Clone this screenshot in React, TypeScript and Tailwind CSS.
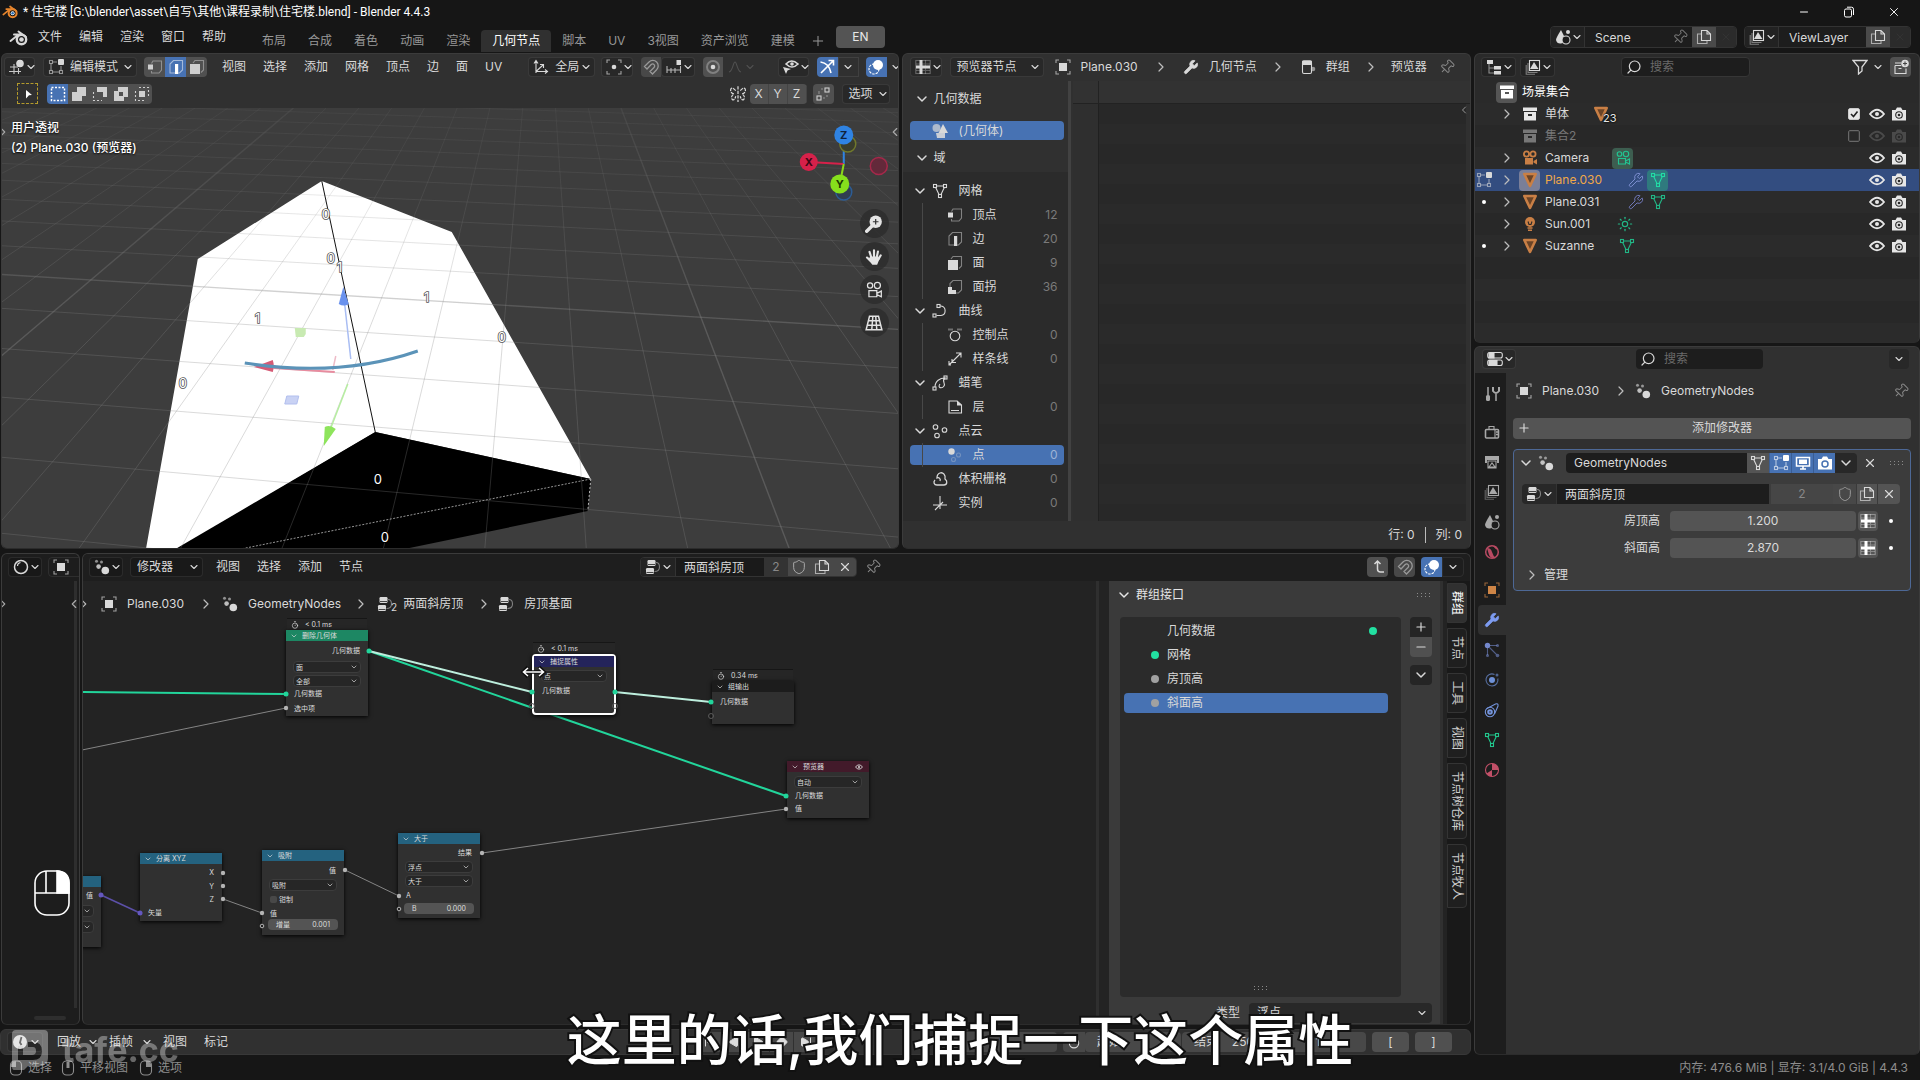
import React from "react";
import { ChevronDown, ChevronRight, ChevronLeft, Pin, Search, Shield, X, Wrench, Plus, Minus, Timer, Sun, SkipBack, SkipForward, Play, Diamond } from "lucide-react";

const F = "font-[Inter,'Noto_Sans_CJK_SC',sans-serif]";

/* ---------- icons ---------- */
const icons: Record<string, React.ReactNode> = {
  object: (
    <>
      <path d="M1 4V1h3M12 1h3v3M15 12v3h-3M4 15H1v-3" opacity=".7" />
      <rect x="4" y="4" width="8" height="8" fill="currentColor" stroke="none" />
    </>
  ),
  magnet: <path d="M1.5 7.5 6 3a5.4 5.4 0 0 1 7.600 7.700L9.500 15 7 12.500 11 8.500a2 2 0 0 0-2.800-3L4 10Z" strokeWidth="1.3" />,
  zoom: (
    <>
      <path d="M1.500 14.500 6 10" strokeWidth="3" strokeLinecap="round" />
      <circle cx="9.500" cy="6" r="5.500" fill="currentColor" stroke="none" />
      <path d="M9.500 3.500v5M7 6h5" stroke="#333" />
    </>
  ),
  hand: (
    <>
      <path d="M5.500 8 4 3.500M8 7.500V2M10.500 8l1-4.800M12 10l2-3.500M4.500 11 1.800 8.500" strokeWidth="1.900" strokeLinecap="round" />
      <path d="M4.500 7.500h7.500l.8 2.500-2 4.800H6.500L3 10.500z" fill="currentColor" stroke="none" />
    </>
  ),
  mesh: (
    <>
      <path d="M4.500 3h7M3.700 4.500 7 11.500M12.300 4.500 9 11.500" />
      <rect x="1.500" y="1.500" width="3" height="3" />
      <rect x="11.500" y="1.500" width="3" height="3" />
      <rect x="6.500" y="11.500" width="3" height="3" />
    </>
  ),
  tri: <path d="M2.300 2h11.400L8 14Z" fill="#6b4427" strokeWidth="2.600" strokeLinejoin="round" />,
  geonodes: (
    <g fill="currentColor" stroke="none">
      <circle cx="2.500" cy="2.200" r="1.500" opacity=".6" />
      <circle cx="7.500" cy="3" r="1.500" opacity=".6" />
      <circle cx="4.600" cy="7.600" r="2.300" opacity=".85" />
      <circle cx="11.300" cy="11.500" r="3.800" />
    </g>
  ),
  nodetree: (
    <>
      <rect x="2.500" y="1" width="8" height="6" rx="1.200" fill="currentColor" stroke="none" />
      <rect x="1" y="9" width="8" height="6" rx="1.200" fill="currentColor" stroke="none" />
      <path d="M3 5.500h7M1.500 13.500h7" stroke="#222" strokeWidth=".8" />
      <path d="M11 3.500q3.500 0 3.500 4.500T9.500 12.500" opacity=".5" />
    </>
  ),
  dup: (
    <>
      <path d="M5.500 1.500h5.500l3.500 3.500v6.500h-9zM11 1.500v3.500h3.500" />
      <path d="M5 5H1.500v9.500H11V12" opacity=".7" />
    </>
  ),
  vmode: (
    <>
      <path d="M4.500 4.500 6 2h8.500v9L12 14H4.500v-2" opacity=".5" />
      <rect x="1" y="5.500" width="5" height="5" fill="currentColor" stroke="none" />
    </>
  ),
  emode: (
    <>
      <path d="M2 14V5l3.500-3.500h9V11L11.500 14Z" opacity=".5" />
      <rect x="7" y="5" width="3.200" height="10" fill="currentColor" stroke="none" />
    </>
  ),
  fmode: (
    <>
      <path d="M4 4l2-2.500h8.500V11l-2.500 2.500" opacity=".5" />
      <rect x="1" y="5" width="10" height="10" fill="currentColor" stroke="none" />
    </>
  ),
  corner: (
    <>
      <path d="M3 8V4.500L6 1.500h8.500V11L11.500 14H9" opacity=".5" />
      <path d="M1 8h4v3h4v4H1z" fill="currentColor" stroke="none" />
    </>
  ),
  view3d: (
    <>
      <path d="M5 5v10M9.500 9v6M1 8h8M0 12.500h12" opacity=".9" />
      <circle cx="11" cy="4.500" r="3.800" fill="currentColor" stroke="none" />
    </>
  ),
  editmode: (
    <>
      <path d="M4.500 3H9M3 4.500v7M4.500 13h7M13 7v4.500" opacity=".6" />
      <rect x="1.500" y="1.500" width="3" height="3" opacity=".6" />
      <rect x="1.500" y="11.500" width="3" height="3" opacity=".6" />
      <rect x="11.500" y="11.500" width="3" height="3" opacity=".6" />
      <rect x="10" y="0" width="6" height="6" rx="1" fill="currentColor" stroke="none" />
    </>
  ),
  orient: <path d="M3 14V2M1 4.500 3 1.500l2 3M3 12.500h11M12 10.500l2.500 2L12 14.500M3 12.500 10 6M7 5.500h3.500V9" />,
  pivot: (
    <>
      <path d="M1 4V1h3M12 1h3v3M15 12v3h-3M4 15H1v-3" opacity=".7" />
      <circle cx="8" cy="8" r="2.300" fill="currentColor" stroke="none" />
    </>
  ),
  snap: (
    <>
      <path d="M1 7v7M5 9v5M9 9v5M14.500 7v7M1 11h14" opacity=".8" />
      <rect x="10.500" y="1" width="4.500" height="5" fill="currentColor" stroke="none" />
    </>
  ),
  prop: (
    <>
      <circle cx="8" cy="8" r="6" opacity=".35" strokeWidth="2" />
      <circle cx="8" cy="8" r="2.300" fill="currentColor" stroke="none" />
    </>
  ),
  falloff: <path d="M2 13C6 12 6 3 8 3s2 9 6 10" />,
  vis: (
    <>
      <path d="M3 5q5.500-6 12 0-6 6-12 0z" strokeWidth="1.600" />
      <circle cx="9" cy="5" r="1.800" fill="currentColor" stroke="none" />
      <path d="M0 8l8 2-3.500 1.500L3 15z" fill="currentColor" stroke="none" />
    </>
  ),
  gizmo: <path d="M1.500 3Q10 4 12 14M2 14 14 2M9.500 1.500H14.500V6.500" strokeWidth="1.600" />,
  overlay: (
    <>
      <circle cx="10" cy="6" r="5" fill="currentColor" stroke="none" />
      <circle cx="6" cy="10" r="5" strokeDasharray="2.500 1" />
    </>
  ),
  sheet: (
    <>
      <rect x=".8" y="1.500" width="14.400" height="13" opacity=".35" />
      <path d="M1 8h14M6 1v14" strokeWidth="3" />
      <path d="M10.500 1v14M1 5h14M1 11.500h14" opacity=".3" />
    </>
  ),
  group: (
    <>
      <rect x="2.500" y="2" width="9" height="12.500" rx="1.500" />
      <rect x="2" y="1.500" width="10" height="4.500" rx="1.200" fill="currentColor" stroke="none" />
      <circle cx="13" cy="10" r="2.300" fill="currentColor" stroke="none" opacity=".6" />
    </>
  ),
  geometry: (
    <g fill="currentColor" stroke="none">
      <circle cx="4.500" cy="5" r="4" opacity=".7" />
      <path d="M11 1l5 9H6.500z" />
      <path d="M4 10h9v5H5z" opacity=".9" />
    </g>
  ),
  curve: (
    <>
      <path d="M4.500 12.500H9a4.800 4.800 0 0 0 0-9.500H8" />
      <rect x="1" y="11" width="3" height="3" />
      <rect x="5" y="1.500" width="3" height="3" />
    </>
  ),
  cpoint: (
    <>
      <circle cx="8" cy="9" r="4.800" />
      <path d="M1 2.500h5M10 2.500h5" opacity=".4" strokeWidth="2" />
    </>
  ),
  spline: <path d="M2 14 14 2M2 10v4h2M9 2h5v4.500M5 8v3.500h4" />,
  gp: (
    <>
      <path d="M3 12C3 6 8 3 13 3 9 6 14 8 12 11s-7 2-4-2" />
      <rect x="1" y="12" width="3" height="3" />
      <rect x="12" y="1" width="3" height="3" />
    </>
  ),
  layer: (
    <>
      <path d="M2 2h8l4.500 4v8H2zM4 11.500h8" />
      <path d="M10 1.500v5h5z" fill="currentColor" stroke="none" />
    </>
  ),
  cloud3: (
    <>
      <circle cx="3.500" cy="4" r="2.300" />
      <circle cx="12.500" cy="7" r="2.300" />
      <circle cx="5" cy="12.500" r="2.300" />
    </>
  ),
  pt: (
    <>
      <circle cx="4.500" cy="4.500" r="3.200" fill="currentColor" stroke="none" />
      <circle cx="11.500" cy="8" r="2" opacity=".3" />
      <circle cx="6.500" cy="12.500" r="2" opacity=".3" />
    </>
  ),
  volume: <path d="M3 9C1 11 2 14 5 14h7c3 0 4-4 1-6C14 4 11 1 8 2 5 3 5 6 5 7c2-1 4 1 3 3" strokeWidth="1.300" />,
  instance: <path d="M8 1v13M1 10h14M3 15l8-8" />,
  scene: (
    <>
      <path d="M6 1l4 8q0 5-4 5.500T1 11q0-2 5-10z" fill="currentColor" stroke="none" />
      <circle cx="13" cy="3" r="2" fill="currentColor" stroke="none" />
      <circle cx="11" cy="11" r="4" fill="#1d1d1d" />
    </>
  ),
  layers: (
    <>
      <rect x="4.500" y="1.500" width="10" height="10" />
      <path d="M5 10l4-7 4.500 7z" fill="currentColor" stroke="none" />
      <path d="M3 4v9.500h9.500M1.200 6v9.300H10" opacity=".5" />
    </>
  ),
  outliner: (
    <>
      <rect x="1" y="1" width="6" height="4" fill="currentColor" stroke="none" />
      <path d="M3 5v9h5M3 9h5" opacity=".6" />
      <rect x="8" y="7" width="7" height="3.500" fill="currentColor" stroke="none" />
      <rect x="8" y="12" width="7" height="3.500" fill="currentColor" stroke="none" />
    </>
  ),
  coll: (
    <>
      <rect x="1" y="1.500" width="14" height="3.500" fill="currentColor" stroke="none" />
      <path d="M2 6h12v8.500H2zM6 8v2h4V8z" fill="currentColor" fillRule="evenodd" stroke="none" />
    </>
  ),
  newcoll: (
    <>
      <path d="M2 4h6M2 6.500v8h11v-5M2 6.500h6M5.500 9.500h3" />
      <circle cx="12" cy="4.500" r="3.800" fill="currentColor" stroke="none" />
      <path d="M12 2.500v4M10 4.500h4" stroke="#444" />
    </>
  ),
  eye: (
    <>
      <path d="M1 8q7-8.500 14 0-7 8.500-14 0z" strokeWidth="1.800" />
      <circle cx="8" cy="8" r="2" fill="currentColor" stroke="none" />
    </>
  ),
  render: (
    <>
      <path d="M1 4h3.500l1.500-2.500h4L11.500 4H15v10.500H1z" fill="currentColor" stroke="none" />
      <circle cx="8" cy="9" r="3.300" stroke="#282828" />
      <circle cx="8" cy="9" r="1.300" fill="#282828" stroke="none" />
    </>
  ),
  renderblue: (
    <>
      <path d="M1 4h3.500l1.500-2.500h4L11.500 4H15v10.500H1z" fill="currentColor" stroke="none" />
      <circle cx="8" cy="9" r="3" stroke="#4772b3" strokeWidth="1.500" />
    </>
  ),
  camobj: (
    <>
      <circle cx="4.500" cy="4" r="2.600" strokeWidth="1.800" />
      <circle cx="11" cy="4" r="2.600" strokeWidth="1.800" />
      <path d="M3 8h8v6.500H3z" fill="currentColor" stroke="none" />
      <path d="M11.500 11l3.500-2v5.500l-3.500-2z" fill="currentColor" stroke="none" />
    </>
  ),
  camdata: (
    <>
      <circle cx="4.500" cy="4" r="2.300" />
      <circle cx="11" cy="4" r="2.700" />
      <path d="M3.500 8.500h7v5.500h-7zM10.500 11l4-2v5l-4-2z" />
    </>
  ),
  bulb: (
    <>
      <circle cx="8" cy="6" r="5" fill="currentColor" stroke="none" />
      <path d="M5.500 12h5M6 14.300h4" strokeWidth="1.600" />
      <path d="M6 5.500l1 3h2l1-3" stroke="#282828" />
    </>
  ),
  props: (
    <>
      <rect x=".7" y="1.500" width="14.600" height="5.500" rx="2" />
      <rect x=".7" y="9" width="14.600" height="5.500" rx="2" />
      <path d="M2 2h5v5H2zM2 9.500h8v5H2z" fill="currentColor" />
    </>
  ),
  tool: (
    <>
      <path d="M4 1v8M12 8v7" strokeWidth="1.500" />
      <rect x="2" y="9" width="4" height="6" rx="1.500" fill="currentColor" stroke="none" />
      <path d="M9 1v4q3 4 6 0V1" strokeWidth="2" />
    </>
  ),
  output2: (
    <>
      <rect x="1.500" y="5.500" width="13" height="8.500" rx="1" strokeWidth="1.600" />
      <path d="M5 5V2.500h5V5M11 5.500v8.500" />
      <path d="M12 8h2M12 10.500h2" strokeWidth="1.500" />
    </>
  ),
  printer: (
    <>
      <path d="M1 2h14v7h-2V6H3v3H1z" fill="currentColor" stroke="none" />
      <path d="M4 7h8v7H4zM5 13l3-4 3 4z" />
    </>
  ),
  world: (
    <>
      <circle cx="8" cy="8" r="6.300" strokeWidth="1.500" />
      <path d="M3 4q4 0 5 4t4 6q-5 1-7-3zM9 2q2 3 5 4l-2-4z" fill="currentColor" stroke="none" />
    </>
  ),
  particles: (
    <>
      <path d="M3.500 6v7M6 3.500h7M5.500 5.500l7 7" opacity=".6" />
      <circle cx="3.500" cy="3.500" r="2.700" fill="currentColor" stroke="none" />
      <circle cx="13.500" cy="3.500" r="1.500" fill="currentColor" stroke="none" opacity=".6" />
      <circle cx="3.500" cy="13.500" r="1.500" fill="currentColor" stroke="none" opacity=".6" />
      <circle cx="13.500" cy="13.500" r="1.800" fill="currentColor" stroke="none" opacity=".6" />
    </>
  ),
  physics: (
    <>
      <path d="M10.500 2.500a6 6 0 1 0 3.300 4" opacity=".7" />
      <circle cx="8" cy="8" r="3" fill="currentColor" stroke="none" />
      <circle cx="13" cy="3" r="1.500" fill="currentColor" stroke="none" opacity=".6" />
    </>
  ),
  constraint: (
    <>
      <circle cx="6" cy="10" r="4.700" />
      <circle cx="6" cy="10" r="1.800" strokeWidth="2" />
      <path d="M3 6.500 11.500 2q3-1 2.500 2l-3.500 8" />
    </>
  ),
  material: (
    <>
      <circle cx="8" cy="8" r="6.500" />
      <path d="M8 8V1.500A6.500 6.500 0 0 1 14.500 8zM8 8v6.500A6.500 6.500 0 0 1 2.500 11.500L8 8z" fill="currentColor" stroke="none" />
    </>
  ),
  monitor: (
    <>
      <rect x="1.500" y="2.500" width="13" height="8.500" strokeWidth="1.500" />
      <rect x="4" y="4.500" width="8" height="4.500" fill="currentColor" stroke="none" />
      <path d="M5 14h6M8 11v3" strokeWidth="1.600" />
    </>
  ),
  sphere: (
    <>
      <circle cx="8" cy="8" r="6.500" strokeWidth="1.500" />
      <path d="M4.500 7q0-3 3-3.500" />
    </>
  ),
  up: <path d="M4.500 5 7.500 2l3 3M7.500 2v8q0 3 3 3H14" strokeWidth="1.500" />,
  clock: (
    <>
      <circle cx="8" cy="8" r="7" fill="currentColor" stroke="none" />
      <path d="M9.500 3 8 8.500 9.500 11" stroke="#1d1d1d" strokeWidth="1.800" />
    </>
  ),
  mirror: <path d="M8 1v14M6 5Q2 1 1.500 4t3 4Q1 10 3 13q2 1 3-3M10 5q4-4 4.500-1t-3 4q3.500 2 1.500 5-2 1-3-3" strokeDasharray="3 1" />,
  auto: (
    <>
      <rect x="10" y="2" width="4" height="4" />
      <rect x="2" y="10" width="4" height="4" />
      <path d="M4 8V5M6 3h2M8 12h2M12 9v2" opacity=".5" />
    </>
  ),
  cursor: <path d="M6 4l6 5-3 .3L6 12.500z" fill="currentColor" stroke="none" />,
  s1: <rect x="1.500" y="1.500" width="13" height="13" strokeDasharray="2 1.500" strokeWidth="1.500" />,
  s2: <path d="M6 1h9v9h-4v5H1V6h5z" fill="currentColor" stroke="none" />,
  s3: (
    <>
      <path d="M5 1h10v10h-4V6H5z" fill="currentColor" stroke="none" />
      <path d="M1.500 6v8.500H10" strokeDasharray="2 2" />
    </>
  ),
  s4: <path d="M5 1h10v10h-4v4H1V5h4zM6 6v4h4V6z" fill="currentColor" fillRule="evenodd" stroke="none" />,
  s5: (
    <>
      <path d="M5 1.500h9.500V10M1.500 5v9.500H11" strokeDasharray="2 2" />
      <rect x="5" y="5" width="6" height="6" fill="currentColor" stroke="none" />
    </>
  ),
  persp: <path d="M4 2h8l3 12H1zM3.500 6h9.500M2.300 10h11.500M7 2 6 14M9.500 2l1 12" strokeWidth="1.300" />,
  mouseL: (
    <>
      <rect x="2.500" y="1" width="11" height="14" rx="4" />
      <path d="M3 7V4q1-3 5-3v6z" fill="currentColor" stroke="none" />
    </>
  ),
  mouseM: (
    <>
      <rect x="2.500" y="1" width="11" height="14" rx="4" />
      <rect x="6.500" y="2" width="3" height="6" fill="currentColor" stroke="none" />
    </>
  ),
  mouseR: (
    <>
      <rect x="2.500" y="1" width="11" height="14" rx="4" />
      <path d="M13 7V4q-1-3-5-3v6z" fill="currentColor" stroke="none" />
    </>
  ),
};

function Ico({ n, c = "size-4" }: { n: string; c?: string }) {
  return (
    <svg viewBox="0 0 16 16" className={"shrink-0 " + c} fill="none" stroke="currentColor" strokeWidth="1.100" aria-hidden="true">
      {icons[n]}
    </svg>
  );
}

const Down = ({ c = "size-3" }: { c?: string }) => <ChevronDown className={"shrink-0 " + c} strokeWidth={2.2} />;
const Right = ({ c = "" }: { c?: string }) => <ChevronRight className={"size-4 shrink-0 text-[#bdbdbd] " + c} strokeWidth={1.8} />;

function IconDrop({ n, label, c = "w-8" }: { n: string; label: string; c?: string }) {
  return (
    <button aria-label={label} className={"flex h-5 shrink-0 items-center justify-between rounded-sm border border-white/8 bg-black/15 pl-1 pr-px " + c}>
      <Ico n={n} />
      <Down />
    </button>
  );
}

function Drop({ label, value, icon, c }: { label: string; value: string; icon?: string; c: string }) {
  return (
    <label className={"relative flex h-5 shrink-0 items-center rounded-sm border border-white/8 bg-black/15 " + c}>
      {icon && <Ico n={icon} c="size-4 ml-1" />}
      <select aria-label={label} className="h-full min-w-0 flex-1 appearance-none bg-transparent pl-1.5 outline-none">
        <option>{value}</option>
      </select>
      <Down c="size-3 pointer-events-none absolute right-0.5" />
    </label>
  );
}

function Menu({ items, c = "" }: { items: string[]; c?: string }) {
  return (
    <nav className={"flex shrink-0 gap-px " + c}>
      {items.map((m) => (
        <button key={m} className="px-2">
          {m}
        </button>
      ))}
    </nav>
  );
}

const area = "overflow-hidden rounded-md border border-[#3b3b3b] border-b-[#2c2c2c] min-h-0 min-w-0";

/* ---------- title + top bar ---------- */
function Logo({ c, color }: { c: string; color: boolean }) {
  return (
    <svg viewBox="0 0 20 16" className={c} aria-hidden="true">
      <g stroke={color ? "#e8862d" : "#d8d8d8"} strokeWidth="2" fill="none" strokeLinecap="round">
        <path d="M9.500 1.500 17 7M5 4.500h7M1.500 11 9 5" />
        <circle cx="12.500" cy="9.500" r="4.700" strokeWidth="2.400" />
      </g>
      <circle cx="12.500" cy="9.500" r="2.300" fill={color ? "#fff" : "#d8d8d8"} />
      {color && <circle cx="12.500" cy="9.500" r="1.500" fill="#2a6fb5" />}
    </svg>
  );
}

function TitleBar() {
  return (
    <header className="flex h-6 shrink-0 items-center pl-0.5 text-white">
      <Logo c="h-3.5 w-[17px]" color />
      <h1 className="ml-1 font-[Roboto,'Noto_Sans_CJK_SC',sans-serif] text-xs">* 住宅楼 [G:\blender\asset\自写\其他\课程录制\住宅楼.blend] - Blender 4.4.3</h1>
      <div className="ml-auto flex items-center">
        <button aria-label="最小化" className="flex w-11 justify-center">
          <Minus className="size-3" />
        </button>
        <button aria-label="还原" className="flex w-[45px] justify-center">
          <svg viewBox="0 0 12 12" className="size-3" fill="none" stroke="currentColor">
            <rect x="1.500" y="3" width="7" height="8" rx="1.500" />
            <path d="M4 1.200h4.500q2 0 2 2V9" />
          </svg>
        </button>
        <button aria-label="关闭" className="mr-1 flex w-[45px] justify-center">
          <X className="size-3.5" strokeWidth={1.6} />
        </button>
      </div>
    </header>
  );
}

function IdBox({ icon, name, pin, c }: { icon: string; name: string; pin?: boolean; c: string }) {
  return (
    <div className={"flex h-[22px] items-center overflow-hidden rounded border border-[#333] bg-[#1d1d1d] " + c}>
      <button aria-label={"浏览 " + name} className="flex h-full w-[34px] items-center justify-between border-r border-[#333] bg-[#222] pl-1 pr-0.5">
        <Ico n={icon} />
        <Down />
      </button>
      <input aria-label={name} defaultValue={name} className="h-full min-w-0 flex-1 bg-transparent pl-2.5 outline-none" />
      {pin && <Pin className="mr-1 size-4 rotate-45 text-[#777]" strokeWidth={1.5} />}
      <button aria-label="新建" className="flex h-full w-6 items-center justify-center bg-[#4a4a4a]">
        <Ico n="dup" />
      </button>
      <button aria-label="删除" className="flex h-full w-5 items-center justify-center bg-[#2b2b2b] text-[#333]">
        <X className="size-3" />
      </button>
    </div>
  );
}

function TopBar() {
  const tabs = ["布局", "合成", "着色", "动画", "渲染", "几何节点", "脚本", "UV", "3视图", "资产浏览", "建模"];
  return (
    <div className="flex h-[29px] shrink-0 items-start pt-0.5">
      <button aria-label="Blender" className="ml-[9px] mt-1">
        <Logo c="h-4 w-5" color={false} />
      </button>
      <Menu items={["文件", "编辑", "渲染", "窗口", "帮助"]} c="ml-px h-[22px] items-center" />
      <div role="tablist" className="ml-[17px] mt-1 flex h-[22px] shrink-0">
        {tabs.map((t) => (
          <button
            key={t}
            role="tab"
            aria-selected={t === "几何节点"}
            className={t === "几何节点" ? "rounded-t bg-[#303030] px-[11px] text-white" : "px-[11px] text-[#989898]"}
          >
            {t}
          </button>
        ))}
      </div>
      <button aria-label="添加工作区" className="ml-1 mt-1 flex h-[22px] items-center text-[#989898]">
        <Plus className="size-4" strokeWidth={1.5} />
      </button>
      <button className="ml-2.5 h-[22px] w-[49px] rounded bg-[#545454] text-[#e8e8e8]">EN</button>
      <div className="ml-auto mr-[9px] flex gap-[7px]">
        <IdBox icon="scene" name="Scene" pin c="w-[187px]" />
        <IdBox icon="layers" name="ViewLayer" c="w-[167px]" />
      </div>
    </div>
  );
}

/* ---------- 3D viewport ---------- */
function Scene3D() {
  const a: number[] = [];
  for (let k = 0; k < 18; k++) a.push(1 / (0.001543 + 0.000205 * k) - 115);
  const b: number[] = [];
  for (let i = -9; i < 19; i++) b.push(i);
  const vals: [string, number, number][] = [
    ["0", 326, 219],
    ["0", 331, 263],
    ["1", 340, 272],
    ["1", 427, 302],
    ["1", 258, 323],
    ["0", 502, 342],
    ["0", 183, 388],
  ];
  return (
    <svg viewBox="2 108 896 440" preserveAspectRatio="xMidYMid slice" className="absolute inset-0 size-full" role="img" aria-label="视口">
      <defs>
        <linearGradient id="fade" x1="0" y1="108" x2="0" y2="330" gradientUnits="userSpaceOnUse">
          <stop offset="0" stopColor="#fff" stopOpacity=".35" />
          <stop offset="1" stopColor="#fff" />
        </linearGradient>
        <mask id="far" maskUnits="userSpaceOnUse" x="0" y="100" width="900" height="460">
          <rect x="0" y="100" width="900" height="460" fill="url(#fade)" />
        </mask>
      </defs>
      <rect x="0" y="100" width="900" height="460" fill="#3d3d3d" />
      <path d="M322 181 198 259 146 550H176L375.500 432 591 479 452 232Z" fill="#fff" />
      <path d="M375.500 432 591 479 588 511 400 550H174Z" fill="#000" />
      <g mask="url(#far)">
        {a.map((y, k) => (
          <path key={k} d={`M0 ${y}L900 ${y + ((y + 126) / 6547) * 900}`} stroke="#848484" strokeWidth={k === 5 ? 1.4 : 1} strokeOpacity={k === 5 ? 0.42 : 0.3} />
        ))}
        {b.map((i) => (
          <path key={i} d={`M${541 + (-227 + 101.7 * i - 541) * (210 / 652)} 108L${541 + (-227 + 101.7 * i - 541)} 550`} stroke="#848484" strokeWidth={i % 10 === 0 ? 1.4 : 1} strokeOpacity={i % 10 === 0 ? 0.42 : 0.3} />
        ))}
      </g>
      <path d="M322 181 375.500 432" stroke="#111" fill="none" />
      <path d="M591 479 241 549" stroke="#bbb" strokeWidth=".8" strokeDasharray="2 1.500" fill="none" />
      <path d="M591 479 588 511" stroke="#ddd" strokeWidth=".8" strokeDasharray="2 2" />
      <path d="M295 328h11v6l-2 3h-8z" fill="#c8eab2" />
      <path d="M287 396h12l-2 8h-12z" fill="#c9d2f4" stroke="#b2bfee" />
      <path d="M345 305 351 359" stroke="#a9bdf3" strokeWidth="1.500" />
      <path d="M343.500 287 349 304q-5 3-10 0z" fill="#6a92ee" />
      <path d="M348 384 331 428" stroke="#b6eea0" strokeWidth="1.500" />
      <path d="M324 446 325 427q5-3 11 2z" fill="#8ee45c" />
      <path d="M274 368 335 372" stroke="#e88c9f" strokeWidth="2" />
      <path d="M336 356 333 370" stroke="#eebcc8" strokeWidth="1.500" />
      <path d="M254 367 273 360q2 6 0 12z" fill="#d55a75" />
      <path d="M245 363Q340 378 418 351" stroke="#5b93b8" strokeWidth="3" fill="none" />
      <g fontFamily="Inter" fontSize="13" textAnchor="middle" fill="#fff" stroke="#555" strokeWidth="1.600" paintOrder="stroke">
        {vals.map(([t, x, y], i) => (
          <text key={i} x={x} y={y}>
            {t}
          </text>
        ))}
        <text x="378" y="484" stroke="#000">0</text>
        <text x="385" y="542" stroke="#000">0</text>
      </g>
      <g strokeWidth="2">
        <path d="M844 164V135" stroke="#2f83e3" />
        <path d="M844 164 809 162" stroke="#d6214a" />
        <path d="M844 164 840 184" stroke="#8ad61a" />
      </g>
      <circle cx="848" cy="144" r="8" fill="#3a3d2c" stroke="#70782c" strokeWidth="1.500" />
      <circle cx="844" cy="192" r="8" fill="#303e50" stroke="#2c5c94" strokeWidth="1.500" />
      <circle cx="879" cy="166" r="8.500" fill="#63293a" stroke="#a5284a" strokeWidth="1.500" />
      <circle cx="844" cy="135" r="9.500" fill="#2f83e3" />
      <circle cx="809" cy="162" r="9" fill="#d6214a" />
      <circle cx="840" cy="184" r="9.500" fill="#86e01c" />
      <g fontFamily="Inter" fontSize="11" fontWeight="700" textAnchor="middle" fill="#10233c">
        <text x="844" y="139">Z</text>
        <text x="809" y="166" fill="#3d0714">X</text>
        <text x="840" y="188" fill="#1c3a02">Y</text>
      </g>
    </svg>
  );
}

function Viewport() {
  const on = "flex h-5 w-[21px] items-center justify-center bg-[#4772b3] text-white";
  const off = "flex h-5 w-[21px] items-center justify-center bg-[#505050] text-[#cfcfcf]";
  return (
    <section className={area + " flex shrink grow-[898] basis-0 flex-col bg-[#303030]"}>
      <div className="flex h-[27px] shrink-0 items-center overflow-hidden pb-0.5">
        <IconDrop n="view3d" label="编辑器类型" c="ml-0.5 w-[31px]" />
        <Drop label="模式" value="编辑模式" icon="editmode" c="ml-2 w-[94px]" />
        <div className="ml-[7px] flex shrink-0 overflow-hidden rounded-sm">
          <button aria-label="顶点" className={off}><Ico n="vmode" /></button>
          <button aria-label="边" className={on}><Ico n="emode" /></button>
          <button aria-label="面" className={off}><Ico n="fmode" /></button>
        </div>
        <Menu items={["视图", "选择", "添加", "网格", "顶点", "边", "面", "UV"]} c="ml-[7px]" />
        <Drop label="变换坐标系" value="全局" icon="orient" c="ml-[18px] w-[67px]" />
        <IconDrop n="pivot" label="轴心点" c="ml-1.5 w-8" />
        <button aria-label="吸附" className="ml-2 flex h-5 w-5 shrink-0 items-center justify-center rounded-l-sm bg-[#484848] text-[#999]">
          <Ico n="magnet" />
        </button>
        <IconDrop n="snap" label="吸附至" c="w-[34px]" />
        <button aria-label="衰减编辑" className="ml-2 flex h-5 w-5 shrink-0 items-center justify-center rounded-l-sm bg-[#505050]">
          <Ico n="prop" />
        </button>
        <button aria-label="衰减" className="flex h-5 w-[33px] shrink-0 items-center justify-between pl-1 text-[#505050]">
          <Ico n="falloff" />
          <Down />
        </button>
        <div className="ml-auto flex shrink-0 items-center">
          <IconDrop n="vis" label="可见性" c="w-[31px]" />
          <button aria-label="Gizmo" className={on + " ml-2 rounded-l-sm"}><Ico n="gizmo" /></button>
          <button aria-label="Gizmo 选项" className="flex h-5 w-[21px] items-center justify-center border border-white/8"><Down /></button>
          <button aria-label="叠加层" className={on + " ml-[7px] rounded-l-sm"}><Ico n="overlay" /></button>
          <button aria-label="叠加层选项" className="flex h-5 w-[11px] items-center justify-end overflow-hidden"><Down c="size-3 -mr-1" /></button>
        </div>
      </div>
      <div className="flex h-[27px] shrink-0 items-center pb-0.5">
        <button aria-label="工具" className="ml-[15px] flex size-[21px] items-center justify-center border border-dashed border-[#b39a2c] text-white">
          <Ico n="cursor" />
        </button>
        <div className="ml-[9px] flex overflow-hidden rounded-sm">
          <button aria-label="设置" className={on}><Ico n="s1" /></button>
          {[["s2", "扩展"], ["s3", "减去"], ["s4", "差值"], ["s5", "相交"]].map(([s, l]) => (
            <button key={s} aria-label={l} className={off}><Ico n={s} /></button>
          ))}
        </div>
        <div className="ml-auto flex items-center">
          <Ico n="mirror" c="size-[18px]" />
          <div className="ml-[3px] flex overflow-hidden rounded-sm">
            {["X", "Y", "Z"].map((s) => (
              <button key={s} className="h-5 w-[19px] border-r border-[#444] bg-[#505050]">{s}</button>
            ))}
          </div>
          <button aria-label="自动合并" className={off + " ml-1.5 rounded-sm"}><Ico n="auto" /></button>
          <button className="ml-2 mr-2 flex h-5 w-[48px] items-center justify-between rounded-sm border border-white/8 bg-black/15 pl-1.5">
            选项 <Down />
          </button>
        </div>
      </div>
      <div className="relative min-h-0 flex-1 overflow-hidden">
        <Scene3D />
        <div className="relative flex h-full justify-between">
          <div className="pl-[9px] pt-2.5 leading-5 font-medium text-white [text-shadow:0_1px_2px_#000]">
            <p>用户透视</p>
            <p>(2) Plane.030 (预览器)</p>
          </div>
          <div className="mr-[9px] flex flex-col gap-1 pt-[101px] text-[#e4e4e4]">
            {[["zoom", "缩放"], ["hand", "平移"], ["camdata", "摄像机视图"], ["persp", "透视"]].map(([n, l]) => (
              <button key={n} aria-label={l} className="flex size-[29px] items-center justify-center rounded-full bg-[#2c2c2c]/80">
                <Ico n={n} c="size-[18px]" />
              </button>
            ))}
          </div>
        </div>
        <ChevronRight className="absolute -left-1.5 top-[17px] size-3.5 text-[#aaa]" />
        <ChevronLeft className="absolute -right-1 top-[17px] size-3.5 text-[#aaa]" />
      </div>
    </section>
  );
}

/* ---------- spreadsheet ---------- */
const domains: { lvl: 1 | 2; open?: boolean; icon: string; name: string; n?: string; sel?: boolean }[] = [
  { lvl: 1, open: true, icon: "mesh", name: "网格" },
  { lvl: 2, icon: "vmode", name: "顶点", n: "12" },
  { lvl: 2, icon: "emode", name: "边", n: "20" },
  { lvl: 2, icon: "fmode", name: "面", n: "9" },
  { lvl: 2, icon: "corner", name: "面拐", n: "36" },
  { lvl: 1, open: true, icon: "curve", name: "曲线" },
  { lvl: 2, icon: "cpoint", name: "控制点", n: "0" },
  { lvl: 2, icon: "spline", name: "样条线", n: "0" },
  { lvl: 1, open: true, icon: "gp", name: "蜡笔" },
  { lvl: 2, icon: "layer", name: "层", n: "0" },
  { lvl: 1, open: true, icon: "cloud3", name: "点云" },
  { lvl: 2, icon: "pt", name: "点", n: "0", sel: true },
  { lvl: 1, icon: "volume", name: "体积栅格", n: "0" },
  { lvl: 1, icon: "instance", name: "实例", n: "0" },
];

function Spreadsheet() {
  return (
    <section className={area + " flex shrink grow-[569] basis-0 flex-col bg-[#303030]"}>
      <div className="flex h-[27px] shrink-0 items-center overflow-hidden pb-0.5 whitespace-nowrap">
        <IconDrop n="sheet" label="编辑器类型" c="ml-[7px] w-8" />
        <Drop label="数据源" value="预览器节点" c="ml-2 w-[94px]" />
        <Ico n="object" c="ml-[11px] size-4" />
        <span className="ml-2.5">Plane.030</span>
        <Right c="ml-[15px]" />
        <Wrench className="ml-3.5 size-4 shrink-0" fill="currentColor" strokeWidth={1} />
        <span className="ml-2.5">几何节点</span>
        <Right c="ml-[13px]" />
        <Ico n="group" c="ml-3.5 size-4" />
        <span className="ml-2.5">群组</span>
        <Right c="ml-[13px]" />
        <span className="ml-3">预览器</span>
        <Pin className="ml-3 size-4 shrink-0 rotate-45 text-[#888]" strokeWidth={1.5} />
      </div>
      <div className="flex min-h-0 flex-1">
        <div className="flex w-[165px] shrink-0 flex-col pl-[7px]">
          <h2 className="flex h-9 items-center">
            <Down c="mx-1 size-4" />几何数据
          </h2>
          <button className="mt-1 mr-1 flex h-[19px] shrink-0 items-center rounded-sm bg-[#4772b3] pl-[22px]">
            <Ico n="geometry" />
            <span className="ml-[11px]">(几何体)</span>
          </button>
          <h2 className="mt-1 flex h-7 items-center">
            <Down c="mx-1 size-4" />域
          </h2>
          <ul className="-ml-[7px] flex-1 overflow-hidden bg-[#2b2b2b] pt-[7px] pl-[7px]">
            {domains.map((d) => (
              <li key={d.name} className="flex h-6 items-center">
                <button className={"mr-1 flex h-5 w-full items-center rounded-sm pr-1.5 " + (d.sel ? "bg-[#4772b3]" : "")}>
                  {d.lvl === 2 ? <span className="mr-6 ml-3 h-6 w-px shrink-0 bg-[#484848]" /> : <span className="w-[22px] shrink-0 pl-0.5">{d.open && <Down c="size-4" />}</span>}
                  <Ico n={d.icon} />
                  <span className={d.lvl === 2 ? "ml-2.5" : "ml-[11px]"}>{d.name}</span>
                  <span className={"ml-auto " + (d.sel ? "text-[#9db2d6]" : "text-[#7a7a7a]")}>{d.n}</span>
                </button>
              </li>
            ))}
          </ul>
        </div>
        <div className="w-[3px] bg-[#424242]" />
        <div className="flex min-w-0 flex-1 flex-col pl-0.5">
          <div className="flex h-[23px] border-b border-[#222] bg-[#323232]">
            <div className="w-[26px] border-r border-[#222]" />
          </div>
          <div className="flex flex-1">
            <div className="w-[26px] border-r border-[#202020] bg-[#2f2f2f]" />
            <div className="flex-1 bg-[repeating-linear-gradient(180deg,#282828_0_20px,#2a2a2a_20px_40px)]" />
            <ChevronLeft className="-ml-2 size-3 text-[#999]" />
          </div>
        </div>
      </div>
      <footer className="flex h-[27px] shrink-0 items-center justify-end pr-2">
        行: 0 <span className="mx-2.5 h-4 w-px bg-[#bbb]" /> 列: 0
      </footer>
    </section>
  );
}

/* ---------- node editor ---------- */
function NDrop({ v }: { v: string }) {
  return (
    <label className="relative mx-[7px] flex h-3 items-center rounded-sm border border-[#3c3c3c] bg-[#262626]">
      <select aria-label={v || "类型"} defaultValue={v} className="w-full appearance-none bg-transparent pl-0.5 outline-none">
        <option>{v}</option>
      </select>
      <ChevronDown className="pointer-events-none absolute right-0.5 size-2" />
    </label>
  );
}
function NField({ l, v }: { l: string; v: string }) {
  return (
    <label className="mx-1.5 flex h-[11px] items-center justify-between rounded-sm bg-[#545454] px-2">
      {l}
      <input aria-label={l} defaultValue={v} className="w-6 bg-transparent text-right outline-none" />
    </label>
  );
}
const NRow = ({ t, r, c = "h-[13px]" }: { t: string; r?: boolean; c?: string }) => <p className={"flex items-center px-2 " + c + (r ? " justify-end" : "")}>{t}</p>;

function Node({ pos, time, title, head, c = "", children, eye }: { pos: string; time?: string; title: string; head: string; c?: string; children: React.ReactNode; eye?: boolean }) {
  return (
    <article className={"absolute text-[7px] leading-none text-[#dcdcdc] " + pos}>
      {time && (
        <div className="mx-px flex h-3 items-center border-t border-[#161616] bg-[#262626] pl-1">
          <Timer className="mr-1.5 size-2" /> {time}
        </div>
      )}
      <div className={"shadow-[0_1px_4px_#000] " + (c || "bg-[#303030]")}>
        <h3 className={"flex h-[11px] items-center pr-1.5 pl-1 " + head}>
          <ChevronDown className="mr-1 size-2" />
          {title}
          {eye && <Ico n="eye" c="ml-auto size-2" />}
        </h3>
        {children}
      </div>
    </article>
  );
}

function Nodes() {
  const G = "#22d59b";
  return (
    <>
      <svg className="absolute inset-0 size-full" aria-hidden="true">
        <g transform="translate(-83 -581)" fill="none" strokeWidth="2">
          <path d="M82 692 286 694M369 651 786 796" stroke={G} />
          <path d="M369 651 532 692M615 692 711 702" stroke="#bdeedd" />
          <path d="M82 750 286 708M786 809 482 853M223 899 262 913M345 870 399 896" stroke="#858585" strokeWidth="1" />
          <path d="M101 895 140 913" stroke="#5c50a8" strokeWidth="1.500" />
        </g>
      </svg>
      <Node pos="left-[203px] top-[37px] w-[82px]" time="< 0.1 ms" title="删除几何体" head="bg-[#1d8763]">
        <NRow t="几何数据" r c="h-[18px]" />
        <div className="space-y-0.5 pt-0.5">
          <NDrop v="面" />
          <NDrop v="全部" />
        </div>
        <NRow t="几何数据" />
        <NRow t="选中项" c="h-4" />
      </Node>
      <Node pos="left-[449px] top-[61px] w-[84px]" time="< 0.1 ms" title="捕捉属性" head="bg-[#24245a]" c="rounded-sm border-2 border-white bg-[#303030] h-[61px]">
        <div className="pt-[3px]">
          <NDrop v="点" />
        </div>
        <NRow t="几何数据" c="h-4" />
      </Node>
      <Node pos="left-[629px] top-[88px] w-[82px]" time="0.34 ms" title="组输出" head="bg-[#1c1c1c]" c="bg-[#303030] h-[43px]">
        <NRow t="几何数据" c="h-[18px]" />
      </Node>
      <Node pos="left-[704px] top-[180px] w-[82px]" title="预览器" head="bg-[#421a2a]" c="bg-[#303030] h-[57px]" eye>
        <div className="pt-1">
          <NDrop v="自动" />
        </div>
        <NRow t="几何数据" c="h-[14px]" />
        <NRow t="值" />
      </Node>
      <Node pos="-left-[64px] top-[295px] w-[82px]" title="" head="bg-[#24627f]" c="bg-[#303030] h-[71px]">
        <NRow t="值" r c="h-4" />
        <div className="space-y-1 pt-0.5">
          <NDrop v="" />
          <NDrop v="" />
        </div>
      </Node>
      <Node pos="left-[57px] top-[272px] w-[82px]" title="分离 XYZ" head="bg-[#24627f]" c="bg-[#303030] h-[68px]">
        <NRow t="X" r c="h-4" />
        <NRow t="Y" r />
        <NRow t="Z" r />
        <NRow t="矢量" />
      </Node>
      <Node pos="left-[179px] top-[269px] w-[82px]" title="吸附" head="bg-[#24627f]" c="bg-[#303030] h-[85px]">
        <NRow t="值" r c="h-[18px]" />
        <NDrop v="吸附" />
        <label className="flex h-4 items-center gap-0.5 px-2">
          <input type="checkbox" className="size-[7px] appearance-none rounded-xs bg-[#484848]" />
          钳制
        </label>
        <NRow t="值" c="h-3" />
        <NField l="增量" v="0.001" />
      </Node>
      <Node pos="left-[315px] top-[252px] w-[82px]" title="大于" head="bg-[#24627f]" c="bg-[#303030] h-[85px]">
        <NRow t="结果" r c="h-[17px]" />
        <div className="space-y-0.5">
          <NDrop v="浮点" />
          <NDrop v="大于" />
        </div>
        <NRow t="A" c="h-4" />
        <NField l="B" v="0.000" />
      </Node>
      <svg className="absolute inset-0 size-full" aria-hidden="true">
        <g transform="translate(-83 -581)">
          {[[369, 651], [286, 694], [532, 692], [615, 692], [711, 702], [786, 796]].map(([x, y]) => (
            <circle key={x} cx={x} cy={y} r="2.500" fill={G} />
          ))}
          {[[532, 706], [615, 706], [711, 716]].map(([x, y]) => (
            <circle key={x} cx={x} cy={y} r="2.500" fill="none" stroke="#5a5a5a" />
          ))}
          {[[286, 708], [786, 809], [223, 873], [223, 886], [223, 899], [262, 913], [345, 870], [399, 896], [482, 853]].map(([x, y]) => (
            <circle key={x + "," + y} cx={x} cy={y} r="2.200" fill="#b4b4b4" />
          ))}
          {[[262, 926], [399, 909]].map(([x, y]) => (
            <circle key={x} cx={x} cy={y} r="1.800" fill="#222" stroke="#b4b4b4" />
          ))}
          <circle cx="101" cy="895" r="2.500" fill="#6457c0" />
          <circle cx="140" cy="913" r="2.500" fill="#6457c0" />
          <path d="M523 672h21M528 667l-5 5 5 5M539 667l5 5-5 5" stroke="#111" strokeWidth="3.500" fill="none" />
          <path d="M523.500 672h20M528 668l-4.500 4 4.500 4M539 668l4.500 4-4.500 4" stroke="#fff" strokeWidth="1.500" fill="none" />
        </g>
      </svg>
    </>
  );
}

const Grip = ({ c = "" }: { c?: string }) => (
  <svg viewBox="0 0 16 6" className={"h-1.5 w-4 shrink-0 text-[#8a8a8a] " + c} aria-hidden="true">
    <path d="M1 1.500h14M1 4.500h14" stroke="currentColor" strokeDasharray="1 3" />
  </svg>
);

function GroupPanel() {
  const rows = [
    { t: "网格", d: "bg-[#22e0a1]" },
    { t: "房顶高", d: "bg-[#a1a1a1]" },
    { t: "斜面高", d: "bg-[#a1a1a1]" },
  ];
  return (
    <aside className="relative flex shrink-0">
      <div className="mr-2.5 w-[3px] bg-[#2f2f2f]" />
      <div className="flex w-[331px] flex-col bg-[#3a3a3a] pr-2 pl-[11px]">
        <h2 className="flex h-7 shrink-0 items-center text-[#e5e5e5]">
          <Down c="-ml-1 mr-1 size-4" />群组接口 <Grip c="ml-auto" />
        </h2>
        <div className="mt-2 flex min-h-0 flex-1 gap-[9px]">
          <div className="flex flex-1 flex-col rounded-sm bg-[#2b2b2b] px-1 pt-1">
            <button className="flex h-5 items-center pr-5 pl-[43px]">
              几何数据 <span className="ml-auto size-2 rounded-full bg-[#22e0a1]" />
            </button>
            {rows.map((r) => (
              <button key={r.t} className={"mt-1 mr-[9px] flex h-5 items-center rounded-sm pl-[27px] " + (r.t === "斜面高" ? "bg-[#4772b3]" : "")}>
                <span className={"mr-2 size-2 rounded-full " + r.d} />
                {r.t}
              </button>
            ))}
            <Grip c="mx-auto mt-auto mb-1.5" />
          </div>
          <div className="flex w-[22px] flex-col">
            <button aria-label="添加" className="flex h-5 items-center justify-center rounded-t-sm bg-[#252525]"><Plus className="size-3.5" /></button>
            <button aria-label="移除" className="flex h-5 items-center justify-center rounded-b-sm bg-[#505050]"><Minus className="size-3.5" /></button>
            <button aria-label="更多" className="mt-2 flex h-5 items-center justify-center rounded-sm bg-[#252525]"><Down c="size-4" /></button>
          </div>
        </div>
        <label className="mt-1.5 mb-px flex shrink-0 items-center text-[#d5d5d5]">
          <span className="w-[120px] text-right">类型</span>
          <span className="relative ml-[9px] flex h-5 flex-1 items-center rounded-sm bg-[#282828]">
            <select className="w-full appearance-none bg-transparent pl-2 outline-none">
              <option>浮点</option>
            </select>
            <Down c="size-3 pointer-events-none absolute right-1" />
          </span>
        </label>
      </div>
      <div className="mr-1 w-[3px] bg-[#303030]" />
      <div role="tablist" className="flex w-[23px] flex-col items-start gap-[5px] bg-[#191919] pt-0.5">
        {["群组", "节点", "工具", "视图", "节点树仓库", "节点牧人"].map((t, i) => (
          <button
            key={t}
            role="tab"
            aria-selected={i === 0}
            className={"flex w-5 items-center justify-center rounded-r border border-[#343434] pt-[7px] pb-[7px] [writing-mode:vertical-rl] [text-orientation:sideways] " + (i === 0 ? "bg-[#303030] text-white" : "bg-[#1f1f1f] text-[#cfcfcf]")}
          >
            {t}
          </button>
        ))}
      </div>
    </aside>
  );
}

function NodeEditor() {
  return (
    <section className={area + " flex flex-1 flex-col bg-[#232323]"}>
      <div className="flex h-[27px] shrink-0 items-center bg-[#1e1e1e] pb-0.5">
        <div className="flex flex-1 items-center">
          <IconDrop n="geonodes" label="编辑器类型" c="ml-1.5 w-[34px]" />
          <Drop label="节点树类型" value="修改器" c="ml-[7px] w-[73px]" />
          <Menu items={["视图", "选择", "添加", "节点"]} c="ml-[5px]" />
        </div>
        <div className="mr-[26px] flex h-5 items-center">
          <div className="flex h-5 items-center overflow-hidden rounded border border-[#333]">
            <button aria-label="浏览节点树" className="flex h-full w-[35px] items-center justify-between border-r border-[#333] bg-[#232323] pr-0.5 pl-1">
              <Ico n="nodetree" />
              <Down />
            </button>
            <input aria-label="节点树名称" defaultValue="两面斜房顶" className="h-full w-[88px] bg-[#1a1a1a] pl-2 outline-none" />
            <button className="h-full w-6 bg-[#333] text-[#888]">2</button>
            <button aria-label="伪用户" className="flex h-full w-[22px] items-center justify-center bg-[#484848] text-[#aaa]"><Shield className="size-4" strokeWidth={1.5} /></button>
            <button aria-label="复制" className="flex h-full w-6 items-center justify-center bg-[#484848]"><Ico n="dup" /></button>
            <button aria-label="断开" className="flex h-full w-[22px] items-center justify-center bg-[#484848]"><X className="size-3.5" /></button>
          </div>
          <Pin className="ml-2 size-4 rotate-45 text-[#888]" strokeWidth={1.5} />
        </div>
        <div className="mr-1.5 flex flex-1 items-center justify-end">
          <button aria-label="父级" className="flex h-5 w-[21px] items-center justify-center rounded-sm bg-[#505050]"><Ico n="up" /></button>
          <button aria-label="吸附" className="ml-1.5 flex h-5 w-[21px] items-center justify-center rounded-sm bg-[#484848] text-[#999]"><Ico n="magnet" /></button>
          <button aria-label="叠加层" className="ml-1.5 flex h-5 w-[21px] items-center justify-center rounded-l-sm bg-[#4772b3] text-white"><Ico n="overlay" /></button>
          <button aria-label="叠加层选项" className="flex h-5 w-[22px] items-center justify-center rounded-r-sm border border-[#2e2e2e]"><Down /></button>
        </div>
      </div>
      <div className="flex min-h-0 flex-1">
        <div className="relative min-w-0 flex-1 overflow-hidden">
          <Nodes />
          <nav className="relative flex h-[46px] items-center pl-[18px]">
            <Ico n="object" />
            <span className="ml-2.5">Plane.030</span>
            <Right c="ml-3.5" />
            <Ico n="geonodes" c="ml-2 size-4" />
            <span className="ml-2.5">GeometryNodes</span>
            <Right c="ml-3" />
            <Ico n="nodetree" c="ml-2 size-4" />
            <sub className="-ml-0.5 text-[10px]">2</sub>
            <span className="ml-1.5">两面斜房顶</span>
            <Right c="ml-[13px]" />
            <Ico n="nodetree" c="ml-1.5 size-4" />
            <span className="ml-2.5">房顶基面</span>
          </nav>
          <ChevronRight className="absolute top-4 -left-1.5 size-3.5 text-[#bbb]" />
        </div>
        <GroupPanel />
      </div>
    </section>
  );
}

function ShaderEditor() {
  return (
    <section className={area + " flex w-[79px] shrink-0 flex-col bg-[#1d1d1d]"}>
      <div className="flex h-[27px] shrink-0 items-center pb-0.5">
        <IconDrop n="sphere" label="编辑器类型" c="ml-1.5 w-[34px]" />
        <button aria-label="着色器类型" className="ml-1.5 flex h-5 w-10 shrink-0 items-center rounded-l-sm border border-white/8 pl-1">
          <Ico n="object" />
        </button>
      </div>
      <div className="relative flex flex-1 justify-end">
        <ChevronRight className="absolute top-4 -left-1.5 size-3.5 text-[#aaa]" />
        <div className="mr-0.5 mb-4 w-[3px] bg-[#2e2e2e]" />
        <ChevronLeft className="absolute top-4 -right-0.5 size-3.5 text-[#aaa]" />
        <div className="absolute bottom-1 left-8 h-1 w-8 rounded-full bg-[#2e2e2e]" />
        <svg viewBox="0 0 36 46" className="absolute top-[289px] left-8 h-[46px] w-9" fill="none" stroke="#fff" strokeWidth="1.600" aria-label="鼠标右键">
          <rect x="1" y="1" width="34" height="44" rx="12" />
          <path d="M23 1h1q11 1 11 12v10H23z" fill="#fff" />
          <path d="M1 23h34M12 1v22" />
        </svg>
      </div>
    </section>
  );
}

/* ---------- timeline ---------- */
function Timeline() {
  const f = "flex h-5 items-center rounded-sm bg-[#484848] px-3";
  const b = "flex h-5 w-[23px] items-center justify-center bg-[#484848]";
  return (
    <section className="flex h-[26px] shrink-0 items-center rounded-md border border-[#383838] bg-[#303030]">
      <IconDrop n="clock" label="编辑器类型" c="ml-1.5 w-9" />
      <button className="ml-3.5 flex items-center gap-1.5">回放 <Down /></button>
      <button className="ml-2.5 flex items-center gap-2">插帧 <Down /></button>
      <Menu items={["视图", "标记"]} c="ml-0.5" />
      <div className="mr-[130px] ml-auto flex gap-px overflow-hidden rounded-sm text-[#ddd]">
        <button aria-label="跳至起点" className={b}><SkipBack className="size-3" fill="currentColor" /></button>
        <button aria-label="倒放" className={b}><Play className="size-3 -scale-x-100" fill="currentColor" /></button>
        <button aria-label="播放" className={b}><Play className="size-3" fill="currentColor" /></button>
        <button aria-label="下一关键帧" className={b}><Diamond className="size-3" fill="currentColor" /></button>
        <button aria-label="跳至终点" className={b}><SkipForward className="size-3" fill="currentColor" /></button>
      </div>
      <label className={f + " w-[110px] justify-center"}>
        <input aria-label="当前帧" defaultValue="1" className="w-full bg-transparent text-center outline-none" />
      </label>
      <button aria-label="使用预览范围" className="ml-1.5 flex h-5 w-[22px] items-center justify-center rounded-l-sm bg-[#484848]"><Timer className="size-3.5" /></button>
      <label className={f + " w-[96px] justify-between"}>
        起始 <input aria-label="起始" defaultValue="1" className="w-6 bg-transparent text-right outline-none" />
      </label>
      <label className={f + " ml-px w-[84px] justify-between"}>
        结束 <input aria-label="结束" defaultValue="250" className="w-7 bg-transparent text-right outline-none" />
      </label>
      <label className={f + " ml-1 w-[96px]"}>
        <input aria-label="步长" defaultValue="1" className="w-full bg-transparent text-center outline-none" />
      </label>
      <button className="ml-1.5 h-5 w-[37px] rounded-sm bg-[#505050]">[</button>
      <button className="mr-[18px] ml-1.5 h-5 w-[37px] rounded-sm bg-[#505050]">]</button>
    </section>
  );
}

/* ---------- outliner ---------- */
function Outliner() {
  const data = "flex size-[21px] items-center justify-center rounded";
  const rows: { name: string; icon: string; ic: string; open?: boolean; dot?: boolean; check?: boolean; dim?: boolean; sel?: boolean; extra?: React.ReactNode }[] = [
    {
      name: "单体", icon: "coll", ic: "text-[#e6e6e6]", open: true, check: true,
      extra: (
        <span className="ml-6 flex items-center text-[#c97f45]">
          <Ico n="tri" />
          <span className="mt-2 -ml-1.5 text-[11px] leading-3 text-[#e6e6e6] [text-shadow:0_0_2px_#000,0_0_2px_#000]">23</span>
        </span>
      ),
    },
    { name: "集合2", icon: "coll", ic: "text-[#777]", check: false, dim: true },
    { name: "Camera", icon: "camobj", ic: "text-[#c97f45]", open: true, extra: <span className={data + " ml-[23px] bg-[#3d5e50] text-[#22c592]"}><Ico n="camdata" /></span> },
    {
      name: "Plane.030", icon: "tri", ic: "text-[#c97f45]", open: true, sel: true,
      extra: <><Wrench className="ml-[26px] size-4 text-[#7d8fd0]" strokeWidth={1.5} /><span className={data + " ml-[3px] bg-[#2f7a7e] text-[#22dba5]"}><Ico n="mesh" /></span></>,
    },
    {
      name: "Plane.031", icon: "tri", ic: "text-[#c97f45]", open: true, dot: true,
      extra: <><Wrench className="ml-[29px] size-4 text-[#7078b8]" strokeWidth={1.5} /><span className={data + " ml-[3px] text-[#22b585]"}><Ico n="mesh" /></span></>,
    },
    { name: "Sun.001", icon: "bulb", ic: "text-[#c97f45]", open: true, extra: <Sun className="ml-[27px] size-4 text-[#22b585]" strokeWidth={1.8} /> },
    { name: "Suzanne", icon: "tri", ic: "text-[#c97f45]", open: true, dot: true, extra: <span className="ml-[25px] text-[#22b585]"><Ico n="mesh" /></span> },
  ];
  return (
    <section className={area + " flex shrink grow-[289] basis-0 flex-col bg-[#2a2a2a]"}>
      <div className="flex h-[27px] shrink-0 items-center pb-0.5">
        <IconDrop n="outliner" label="编辑器类型" c="ml-1.5 w-[35px]" />
        <IconDrop n="layers" label="显示模式" c="ml-1 w-[35px]" />
        <label className="ml-[66px] flex h-5 w-[129px] items-center rounded-sm border border-[#363636] bg-[#1d1d1d]">
          <Search className="ml-1 size-4 shrink-0 -scale-x-100" strokeWidth={1.8} />
          <input aria-label="搜索" placeholder="搜索" className="ml-2 w-full min-w-0 bg-transparent outline-none placeholder:text-[#6a6a6a]" />
        </label>
        <button aria-label="过滤" className="ml-auto flex h-5 w-[34px] items-center justify-between pr-0.5">
          <svg viewBox="0 0 16 16" className="size-4" fill="none" stroke="currentColor" strokeWidth="1.300"><path d="M1 1.500h14L10 8v4l-3.500 3V8z" /></svg>
          <Down />
        </button>
        <button aria-label="新建集合" className="mr-2 ml-1 flex h-5 w-[21px] items-center justify-center rounded-sm bg-[#505050]"><Ico n="newcoll" /></button>
      </div>
      <ul>
        <li className="flex h-[22px] items-center pl-[21px] text-white">
          <span className="flex size-[21px] items-center justify-center rounded bg-[#555]"><Ico n="coll" /></span>
          <span className="ml-[5px]">场景集合</span>
        </li>
        {rows.map((r, i) => (
          <li key={r.name} className={"flex h-[22px] items-center " + (r.sel ? "bg-[#334d80]" : i % 2 ? "bg-[#282828]" : "bg-[#2b2b2b]") + (r.dim ? " text-[#777]" : "")}>
            <span className="flex w-[18px] shrink-0 justify-center">
              {r.sel && <Ico n="editmode" />}
              {r.dot && <span className="size-1 rounded-full bg-white" />}
            </span>
            <span className="flex w-7 shrink-0 justify-center">{r.open && <Right />}</span>
            <span className={"-ml-0.5 flex size-[21px] shrink-0 items-center justify-center rounded " + r.ic + (r.sel ? " bg-[#7a7f99]" : "")}><Ico n={r.icon} /></span>
            <span className={"ml-[5px] " + (r.sel ? "text-[#f0a848]" : "")}>{r.name}</span>
            {r.extra}
            <span className="mr-3 ml-auto flex items-center gap-1.5">
              {r.check !== undefined && (
                <label className="mr-[3px] flex">
                  <input type="checkbox" aria-label={r.name} defaultChecked={r.check} className="peer sr-only" />
                  <svg viewBox="0 0 12 12" className="size-3" aria-hidden="true">
                    <rect x=".7" y=".7" width="10.600" height="10.600" rx="1" fill={r.check ? "#e6e6e6" : "none"} stroke={r.check ? "#e6e6e6" : "#777"} />
                    {r.check && <path d="M3 6l2.500 2.500L9.500 3.500" fill="none" stroke="#222" strokeWidth="1.600" />}
                  </svg>
                </label>
              )}
              <span className={"flex gap-1.5 " + (r.dim ? "text-[#4a4a4a]" : "text-[#e6e6e6]")}>
                <button aria-label="隐藏"><Ico n="eye" /></button>
                <button aria-label="渲染"><Ico n="render" /></button>
              </span>
            </span>
          </li>
        ))}
      </ul>
      <div className="flex-1 bg-[repeating-linear-gradient(180deg,#282828_0_22px,#2b2b2b_22px_44px)]" />
    </section>
  );
}

/* ---------- properties ---------- */
function Field({ l, v }: { l: string; v: string }) {
  return (
    <label className="flex h-5 items-center">
      <span className="w-[138px] text-right">{l}</span>
      <input defaultValue={v} className="ml-2.5 h-5 min-w-0 flex-1 rounded-sm bg-[#545454] text-center outline-none" />
      <span className="ml-0.5 flex h-5 w-5 items-center justify-center rounded-sm bg-[#545454] text-white"><Ico n="sheet" /></span>
      <span className="mx-[11px] size-1 rounded-full bg-white" />
    </label>
  );
}

function Properties() {
  const tabs: [string, string, string][] = [
    ["tool", "text-[#a8a8a8]", "工具"],
    ["output2", "text-[#a8a8a8] mt-2", "渲染"],
    ["printer", "text-[#a8a8a8]", "输出"],
    ["layers", "text-[#a8a8a8]", "视图层"],
    ["scene", "text-[#a8a8a8]", "场景"],
    ["world", "text-[#b84a62]", "世界环境"],
    ["object", "text-[#cf8546] mt-2", "物体"],
    ["wrench", "bg-[#303030] text-[#7d9bf0]", "修改器"],
    ["particles", "text-[#7488cc]", "粒子"],
    ["physics", "text-[#6f92d8]", "物理"],
    ["constraint", "text-[#7494dc]", "约束"],
    ["mesh", "text-[#22c58c]", "数据"],
    ["material", "text-[#c25068]", "材质"],
  ];
  const on = "flex h-5 w-[22px] items-center justify-center border-l border-[#3a5d94] bg-[#4772b3] text-white";
  return (
    <section className={area + " flex shrink grow-[710] basis-0 flex-col bg-[#303030]"}>
      <div className="flex h-[26px] shrink-0 items-center pb-0.5">
        <IconDrop n="props" label="编辑器类型" c="ml-[7px] w-[34px]" />
        <label className="mr-1.5 ml-auto flex h-5 w-[127px] items-center rounded-sm bg-[#1d1d1d]">
          <Search className="ml-1 size-4 shrink-0 -scale-x-100" strokeWidth={1.8} />
          <input aria-label="搜索属性" placeholder="搜索" className="ml-2 w-full min-w-0 bg-transparent outline-none placeholder:text-[#6a6a6a]" />
        </label>
        <button aria-label="选项" className="mr-2.5 ml-auto flex h-5 w-5 items-center justify-center rounded-sm bg-[#282828]"><Down /></button>
      </div>
      <div className="flex min-h-0 flex-1">
        <div role="tablist" className="flex w-[31px] shrink-0 flex-col items-end bg-[#1d1d1d] pt-1.5">
          {tabs.map(([n, c, l]) => (
            <button key={l} role="tab" aria-selected={n === "wrench"} aria-label={l} className={"flex h-[30px] w-7 shrink-0 items-center justify-center rounded-l " + c}>
              {n === "wrench" ? <Wrench className="size-4" fill="currentColor" strokeWidth={1} /> : <Ico n={n} />}
            </button>
          ))}
        </div>
        <div className="min-w-0 flex-1 pt-1.5 pr-2 pl-[7px]">
          <nav className="flex h-6 items-center pl-[3px]">
            <Ico n="object" />
            <span className="ml-2.5">Plane.030</span>
            <Right c="ml-3.5" />
            <Ico n="geonodes" c="ml-1.5 size-4" />
            <span className="ml-2.5">GeometryNodes</span>
            <Pin className="mr-0.5 ml-auto size-4 rotate-45 text-[#888]" strokeWidth={1.5} />
          </nav>
          <button className="relative mt-[15px] flex h-[21px] w-full items-center justify-center rounded bg-[#545454] pl-5">
            <Plus className="absolute left-1 size-3.5" />
            添加修改器
          </button>
          <div className="mt-2.5 rounded border border-[#4d6896] bg-[#3c3c3c] pb-1">
            <div className="flex h-[26px] items-center pl-1">
              <Down c="size-4" />
              <Ico n="geonodes" c="ml-1 size-4" />
              <input aria-label="修改器名称" defaultValue="GeometryNodes" className="ml-3 h-5 min-w-0 flex-1 rounded-l-sm bg-[#1d1d1d] pl-2 outline-none" />
              <button aria-label="笼" className="flex h-5 w-[22px] items-center justify-center bg-[#545454]"><Ico n="mesh" /></button>
              <button aria-label="编辑模式" className={on}><Ico n="editmode" /></button>
              <button aria-label="实时" className={on}><Ico n="monitor" /></button>
              <button aria-label="渲染" className={on}><Ico n="renderblue" /></button>
              <button aria-label="更多" className="flex h-5 w-[22px] items-center justify-center rounded-r-sm bg-[#282828]"><Down c="size-4" /></button>
              <button aria-label="移除" className="ml-1.5"><X className="size-3.5" /></button>
              <Grip c="mr-[5px] ml-3" />
            </div>
            <div className="mt-2 flex h-5 items-center pr-2.5 pl-2">
              <button aria-label="浏览节点组" className="flex h-5 w-[34px] items-center justify-between rounded-l-sm bg-[#282828] pr-0.5 pl-1"><Ico n="nodetree" /><Down /></button>
              <input aria-label="节点组名称" defaultValue="两面斜房顶" className="h-5 min-w-0 flex-1 border-l border-[#333] bg-[#1d1d1d] pl-2 outline-none" />
              <button className="ml-0.5 h-5 w-[62px] bg-[#464646] text-[#888]">2</button>
              <button aria-label="伪用户" className="flex h-5 w-[23px] items-center justify-center bg-[#484848] text-[#999]"><Shield className="size-4" strokeWidth={1.5} /></button>
              <button aria-label="复制" className="flex h-5 w-[22px] items-center justify-center border-x border-[#3a3a3a] bg-[#545454]"><Ico n="dup" /></button>
              <button aria-label="断开" className="flex h-5 w-[22px] items-center justify-center rounded-r-sm bg-[#545454]"><X className="size-3.5" /></button>
            </div>
            <div className="mt-[7px] space-y-[7px] pr-1.5 pl-2">
              <Field l="房顶高" v="1.200" />
              <Field l="斜面高" v="2.870" />
            </div>
            <button className="mt-1.5 flex h-[22px] items-center pl-2.5"><Right c="mr-1" />管理</button>
          </div>
        </div>
      </div>
    </section>
  );
}

/* ---------- app ---------- */
export default function App() {
  return (
    <div lang="zh-CN" className={F + " relative flex h-screen w-full flex-col overflow-hidden bg-[#161616] text-xs text-[#d9d9d9]"}>
      <TitleBar />
      <TopBar />
      <main className="flex min-h-0 flex-1 gap-[3px]">
        <div className="flex min-w-0 flex-1 flex-col gap-1">
          <div className="flex min-h-0 grow-[496] basis-0 gap-[3px] pl-px">
            <Viewport />
            <Spreadsheet />
          </div>
          <div className="flex min-h-0 grow-[472] basis-0 gap-0.5 pl-px">
            <ShaderEditor />
            <NodeEditor />
          </div>
          <Timeline />
        </div>
        <div className="flex w-[446px] shrink-0 flex-col gap-[3px]">
          <Outliner />
          <Properties />
        </div>
      </main>
      <footer className="flex h-[25px] shrink-0 items-center pl-2 text-[#8d8d8d]">
        <Ico n="mouseL" />
        <span className="ml-1">选择</span>
        <Ico n="mouseM" c="ml-2 size-4" />
        <span className="ml-1">平移视图</span>
        <Ico n="mouseR" c="ml-2.5 size-4" />
        <span className="ml-1">选项</span>
        <span className="mr-3 ml-auto">内存: 476.6 MiB | 显存: 3.1/4.0 GiB | 4.4.3</span>
      </footer>
      <div className="pointer-events-none absolute bottom-2.5 left-2.5 flex items-center gap-3 text-white opacity-35">
        <svg viewBox="0 0 40 40" className="size-10" aria-hidden="true">
          <path d="M6 0h28q4 0 4 4v24q0 6-6 8H18l-4 4H4q-2 0-2-4V4q0-4 4-4zM18 12v5h5q3 0 3 4t-4 4h-9v-9H8v14h15q9 0 9-9t-9-9z" fill="currentColor" fillRule="evenodd" />
        </svg>
        <span className="text-[34px] leading-10 font-bold">tafe.cc</span>
      </div>
      <p className="pointer-events-none absolute inset-x-0 bottom-2 text-center text-[55px] leading-[64px] font-medium text-white [paint-order:stroke] [-webkit-text-stroke:4px_#111]">这里的话,我们捕捉一下这个属性</p>
    </div>
  );
}
